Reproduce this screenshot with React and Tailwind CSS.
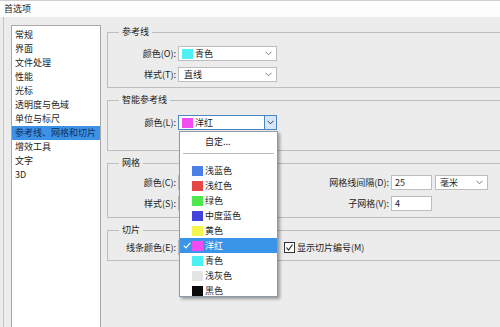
import React from "react";

const Chevron = ({ color = "#7a7a7a" }) => (
  <svg width="7" height="5" viewBox="0 0 7 5" className="shrink-0">
    <polyline points="0.5,0.8 3.5,3.8 6.5,0.8" fill="none" stroke={color} strokeWidth="1" />
  </svg>
);

const Swatch = ({ color }) => (
  <span className="inline-block w-[11px] h-[10px] shrink-0" style={{ backgroundColor: color }} />
);

function Select({ width = "w-[99px]", swatch, text, textPad = "pl-[3px]" }) {
  return (
    <div className={`${width} h-[15px] border border-[#bdbdbd] bg-white flex items-center ${textPad} pr-[4px] shrink-0`}>
      {swatch && <Swatch color={swatch} />}
      {text && <span className={swatch ? "ml-[2px]" : ""}>{text}</span>}
      <span className="flex-1" />
      <Chevron />
    </div>
  );
}

function Label({ children, w = "w-[70px]" }) {
  return <div className={`${w} text-right pr-[2px] shrink-0 whitespace-nowrap`}>{children}</div>;
}

const listItems = [
  "常规",
  "界面",
  "文件处理",
  "性能",
  "光标",
  "透明度与色域",
  "单位与标尺",
  "参考线、网格和切片",
  "增效工具",
  "文字",
  "3D",
];

const colors = [
  ["浅蓝色", "#4c7fe6"],
  ["浅红色", "#e64646"],
  ["绿色", "#4ee84c"],
  ["中度蓝色", "#4343dc"],
  ["黄色", "#f6f54c"],
  ["洋红", "#f04cf0"],
  ["青色", "#4cf0f2"],
  ["浅灰色", "#e4e4e4"],
  ["黑色", "#0a0a0a"],
];

export default function App() {
  return (
    <div className="relative w-[500px] h-[327px] overflow-hidden bg-[#ececec] text-[9px] leading-[12px] text-[#1c1c1c] font-['Noto_Sans_CJK_SC','Noto_Sans',sans-serif]">
      {/* title bar */}
      <div className="h-[17px] bg-[#fdfdfd] border-t border-[#cfcfcf] flex items-center pl-[4px]">
        首选项
      </div>

      <div className="flex h-[310px] pl-[3px]">
        {/* left */}
        <div className="border-l border-[#c4c4c4] pl-[7px] pt-[8px] shrink-0">
          <div className="w-[90px] h-[330px] border border-[#a9a9a9] bg-white pt-[2px]">
            {listItems.map((t, i) => (
              <div
                key={t}
                className={`h-[14px] flex items-center pl-[3px] whitespace-nowrap ${
                  i === 7 ? "bg-[#3d92e6] text-[#11305e]" : ""
                }`}
              >
                {t}
              </div>
            ))}
          </div>
        </div>

        {/* right */}
        <div className="pl-[6px] pt-[9px] flex flex-col gap-[6px] shrink-0">
          <fieldset className="w-[400px] border border-[#bdbdbd] pt-[8px] pb-[5px] flex flex-col gap-[6px]">
            <legend className="ml-[11px] px-[3px] leading-[12px]">参考线</legend>
            <div className="flex items-center">
              <Label>颜色(O):</Label>
              <Select swatch="#4ef0f3" text="青色" />
            </div>
            <div className="flex items-center">
              <Label>样式(T):</Label>
              <Select text="直线" textPad="pl-[5px]" />
            </div>
          </fieldset>

          <fieldset className="w-[400px] border border-[#bdbdbd] pt-[9px] pb-[20px]">
            <legend className="ml-[11px] px-[3px] leading-[12px]">智能参考线</legend>
            <div className="flex items-center">
              <Label>颜色(L):</Label>
              <div className="w-[99px] h-[15px] border border-[#4a86bd] bg-white flex items-center pl-[3px] shrink-0">
                <Swatch color="#f04cf0" />
                <span className="ml-[2px]">洋红</span>
                <span className="flex-1" />
                <div className="w-[12px] h-full bg-[#d6e8f8] border-l border-[#4a86bd] flex items-center justify-center">
                  <Chevron color="#333" />
                </div>
              </div>
            </div>
          </fieldset>

          <fieldset className="w-[400px] border border-[#bdbdbd] pt-[6px] pb-[6px] flex flex-col gap-[6px]">
            <legend className="ml-[11px] px-[3px] leading-[12px]">网格</legend>
            <div className="flex items-center h-[15px]">
              <Label>颜色(C):</Label>
              <Select />
              <Label w="w-[114px]">网格线间隔(D):</Label>
              <div className="w-[41px] h-[15px] border border-[#bdbdbd] bg-white pl-[3px] flex items-center shrink-0">25</div>
              <div className="ml-[3px]">
                <Select width="w-[53px]" text="毫米" textPad="pl-[4px]" />
              </div>
            </div>
            <div className="flex items-center h-[15px]">
              <Label>样式(S):</Label>
              <Select />
              <Label w="w-[114px]">子网格(V):</Label>
              <div className="w-[41px] h-[15px] border border-[#bdbdbd] bg-white pl-[3px] flex items-center shrink-0">4</div>
            </div>
          </fieldset>

          <fieldset className="w-[400px] border border-[#bdbdbd] pt-[4px] pb-[5px]">
            <legend className="ml-[11px] px-[3px] leading-[12px]">切片</legend>
            <div className="flex items-center h-[15px]">
              <Label>线条颜色(E):</Label>
              <Select />
              <div className="ml-[7px] w-[11px] h-[11px] border border-[#333] bg-white flex items-center justify-center shrink-0">
                <svg width="9" height="9" viewBox="0 0 9 9">
                  <polyline points="1.5,4.5 3.5,7 7.5,1.5" fill="none" stroke="#222" strokeWidth="1.1" />
                </svg>
              </div>
              <span className="ml-[2px] whitespace-nowrap">显示切片编号(M)</span>
            </div>
          </fieldset>
        </div>
      </div>

      {/* dropdown popup */}
      <div className="absolute left-[179px] top-[131px] w-[99px] h-[166px] bg-white border border-[#8d9aa8] shadow-[2px_2px_3px_rgba(0,0,0,0.35)] pt-[3px]">
        <div className="h-[14px] flex items-center pl-[25px]">自定...</div>
        <div className="mt-[4px] mx-[3px] h-px bg-[#bdbdbd]" />
        <div className="mt-[9px]">
          {colors.map(([name, c]) => {
            const sel = name === "洋红";
            return (
              <div
                key={name}
                className={`h-[15px] flex items-center relative pl-[12px] ${sel ? "bg-[#3a94e8] text-white" : ""}`}
              >
                {sel && (
                  <svg width="8" height="7" viewBox="0 0 8 7" className="absolute left-[3px] top-[4px]">
                    <polyline points="0.8,3.6 3,5.8 7.2,0.8" fill="none" stroke="#fff" strokeWidth="1.2" />
                  </svg>
                )}
                <Swatch color={c} />
                <span className="ml-[2px]">{name}</span>
              </div>
            );
          })}
        </div>
      </div>
    </div>
  );
}
